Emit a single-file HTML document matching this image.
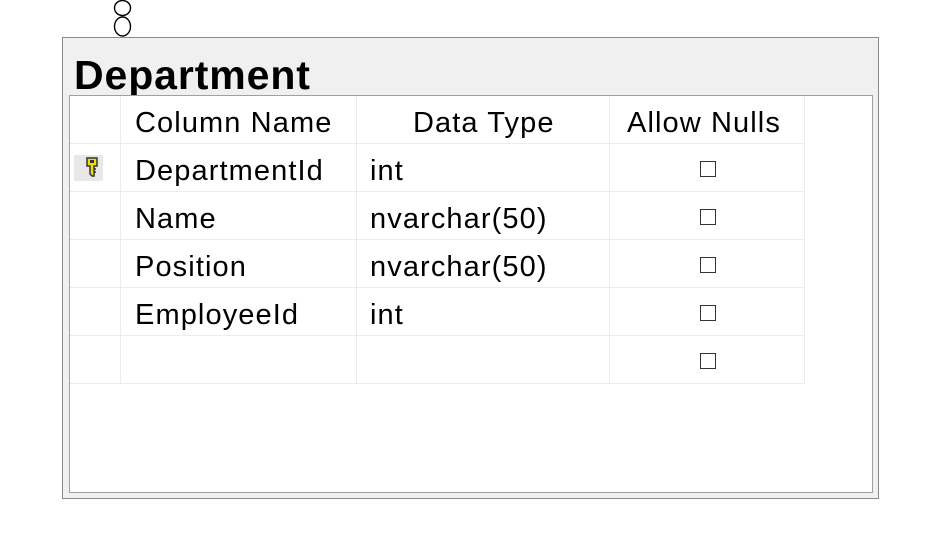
<!DOCTYPE html>
<html><head><meta charset="utf-8"><style>
html,body{margin:0;padding:0;background:#fff;width:943px;height:546px;overflow:hidden;font-family:"Liberation Sans",sans-serif}
.outer{position:absolute;left:62px;top:37px;width:815px;height:460px;border:1px solid #8a8a8a;background:#f0f0f0}
.title{position:absolute;left:74px;top:51px;font-size:41px;font-weight:bold;letter-spacing:0.9px;color:#000;line-height:48px}
.inner{position:absolute;left:69px;top:95px;width:802px;height:396px;border:1px solid #a0a0a0;background:#fff}
.cell{position:absolute;height:47px;border-right:1px solid #ececec;border-bottom:1px solid #ececec;box-sizing:content-box}
.tx{position:absolute;font-size:29px;letter-spacing:1.1px;line-height:30px;color:#000;white-space:nowrap}
.cb{position:absolute;width:14px;height:14px;border:1px solid #333;background:#fff}
</style></head><body>
<svg style="position:absolute;left:110px;top:0" width="26" height="40"><ellipse cx="12.5" cy="8" rx="8" ry="7.5" fill="#fff" stroke="#000" stroke-width="1.4"/><ellipse cx="12.5" cy="26.5" rx="8" ry="9.5" fill="#fff" stroke="#000" stroke-width="1.4"/></svg>
<div class="outer"></div>
<div class="title">Department</div>
<div class="inner"></div>
<div id="g"></div>
<div style="position:absolute;left:74px;top:155px;width:29px;height:26px;background:#e8e8e8"></div>
<svg style="position:absolute;left:85px;top:156px" width="14" height="24" viewBox="0 0 14 24"><path d="M2 2h10v8h-3v10h-2l-2-2v-8H2z" fill="#f0e000" stroke="#333" stroke-width="1.5"/><rect x="5" y="4" width="4" height="3" fill="#333"/><path d="M9 13h2M9 16h2" stroke="#333" stroke-width="1.5"/></svg>
<script>
var cols=[[70,51],[121,236],[357,253],[610,195]];
var rows=[["","Column Name","Data Type","Allow Nulls"],["","DepartmentId","int",""],["","Name","nvarchar(50)",""],["","Position","nvarchar(50)",""],["","EmployeeId","int",""],["","","",""]];
var hx={1:135,2:413,3:627};
var h="";
for(var r=0;r<6;r++){var y=96+r*48;for(var c=0;c<4;c++){
h+='<div class="cell" style="left:'+cols[c][0]+'px;top:'+y+'px;width:'+(cols[c][1]-1)+'px"></div>';
var t=rows[r][c];if(t){var x=(r==0)?hx[c]:(c==1?135:370);h+='<div class="tx" style="left:'+x+'px;top:'+(y+12)+'px">'+t+'</div>';}}
if(r>0)h+='<div class="cb" style="left:700px;top:'+(y+65-48)+'px"></div>';}
document.getElementById("g"). innerHTML=h;
</script>
</body></html>
